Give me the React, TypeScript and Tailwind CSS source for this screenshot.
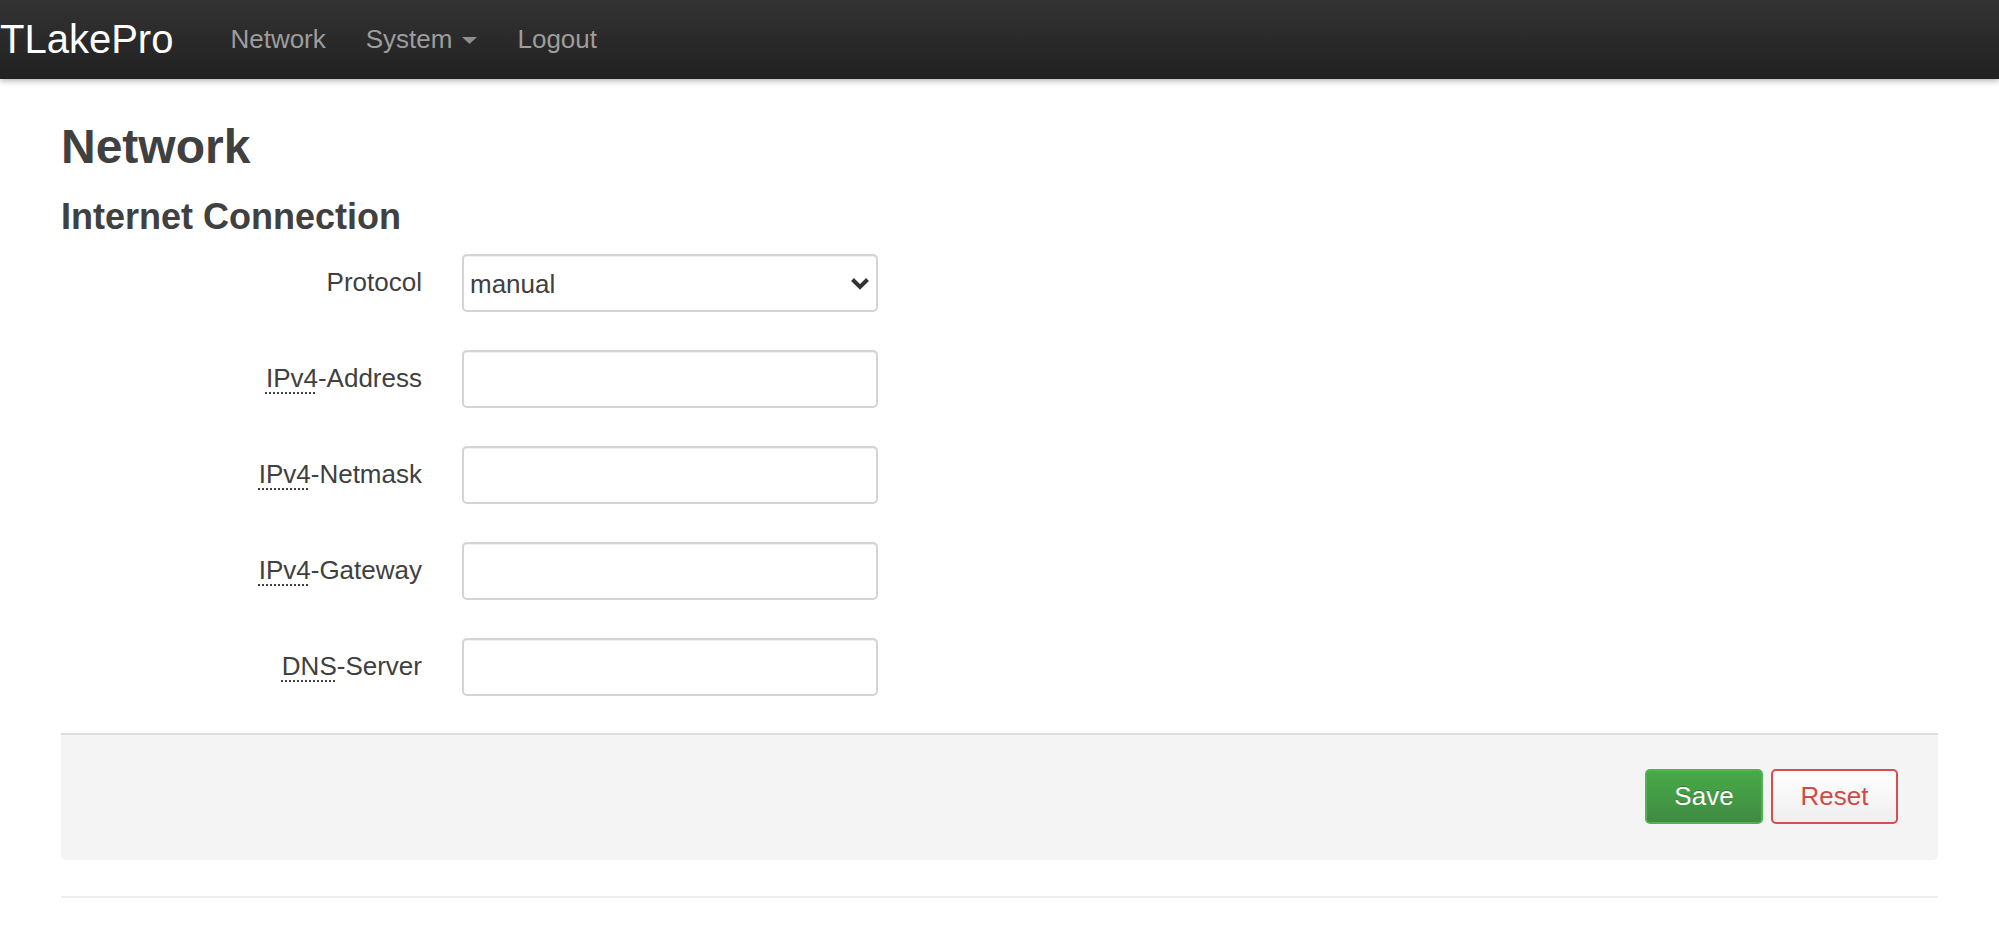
import React from 'react';

type Field = {
  abbr?: string;
  title?: string;
  rest: string;
  select?: string;
};

const fields: Field[] = [
  { rest: 'Protocol', select: 'manual' },
  { abbr: 'IPv4', title: 'Internet Protocol Version 4', rest: '-Address' },
  { abbr: 'IPv4', title: 'Internet Protocol Version 4', rest: '-Netmask' },
  { abbr: 'IPv4', title: 'Internet Protocol Version 4', rest: '-Gateway' },
  { abbr: 'DNS', title: 'Domain Name System', rest: '-Server' },
];

function Navbar() {
  return (
    <div className="flex h-[79px] items-center bg-linear-to-b from-[#333333] to-[#212121] shadow-[0_2px_6px_rgba(0,0,0,0.3)]">
      <a className="-mt-[2px] text-[40px] leading-[1.15] text-white">TLakePro</a>
      <ul className="ml-[37px] flex items-center text-[26px] leading-[1.15] text-[#9d9d9d]">
        <li className="px-[20px]">Network</li>
        <li className="flex items-center px-[20px]">
          System
          <svg width="15" height="7" viewBox="0 0 15 7" className="ml-[10px] mt-[2px]">
            <polygon points="0,0 15,0 7.5,7" fill="#8f8f8f" />
          </svg>
        </li>
        <li className="px-[20px]">Logout</li>
      </ul>
    </div>
  );
}

function Control({ value }: { value?: string }) {
  return (
    <div className="flex h-[58px] w-[416px] items-center justify-between rounded-[5px] border-2 border-[#d4d4d4] bg-white pl-[6px] pr-[6px] shadow-[inset_0_1px_1px_rgba(0,0,0,0.06)]">
      <span className="mt-[1px] text-[26px] leading-none text-[#404040]">{value}</span>
      {value !== undefined && (
        <svg width="20" height="13" viewBox="0 0 20 13" className="mt-[1px]">
          <path d="M2.5 2.5 L10 10 L17.5 2.5" fill="none" stroke="#333" strokeWidth="4" />
        </svg>
      )}
    </div>
  );
}

function Row({ field }: { field: Field }) {
  return (
    <div className="flex items-center">
      <label className="w-[361px] text-right text-[26px] leading-[1.15] text-[#404040]">
        {field.abbr && (
          <abbr
            title={field.title}
            className="cursor-help underline decoration-dotted decoration-2 underline-offset-[5px]"
          >
            {field.abbr}
          </abbr>
        )}
        {field.rest}
      </label>
      <div className="ml-[40px]">
        <Control value={field.select} />
      </div>
    </div>
  );
}

export default function App() {
  return (
    <div className="min-h-[945px] bg-white font-['Liberation_Sans',Arial,sans-serif] text-[#404040]">
      <Navbar />
      <div className="px-[61px]">
        <h1 className="mt-[42px] text-[48px] font-bold leading-[1.1]">Network</h1>
        <h2 className="mt-[23px] text-[36px] font-bold leading-[1.1]">Internet Connection</h2>

        <div className="mt-[18px] flex flex-col gap-[38px]">
          {fields.map((f) => (
            <Row key={f.rest} field={f} />
          ))}
        </div>

        <div className="mt-[37px] flex h-[127px] items-center justify-end gap-[8px] rounded-b-[5px] border-t-2 border-[#dcdcdc] bg-[#f4f4f4] pr-[40px]">
          <button
            type="button"
            className="-mt-[3px] h-[55px] w-[118px] rounded-[5px] border-2 border-[#52b352] bg-linear-to-b from-[#48aa48] to-[#3f8b41] text-[26px] text-white [text-shadow:0_-1px_0_rgba(0,0,0,0.25)]"
          >
            Save
          </button>
          <button
            type="button"
            className="-mt-[3px] h-[55px] w-[127px] rounded-[5px] border-2 border-[#d64f4c] bg-linear-to-b from-white to-[#eeeeee] text-[26px] text-[#d24a47]"
          >
            Reset
          </button>
        </div>

        <div className="mt-[36px] border-t-2 border-[#eeeeee]" />
      </div>
    </div>
  );
}
